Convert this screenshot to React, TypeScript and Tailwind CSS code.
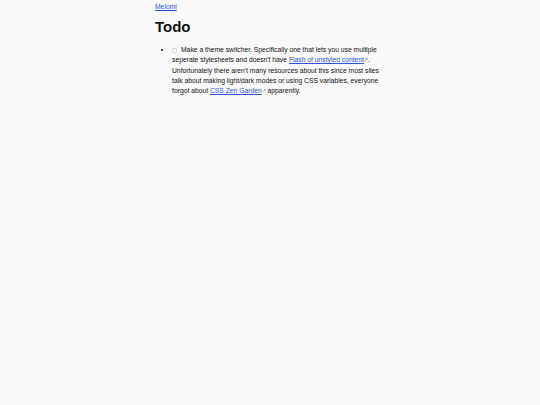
import React from 'react'

function ExternalArrow() {
  return <span className="inline-block text-[5px] leading-none align-[1px] text-gray-500">↗</span>
}

export default function App() {
  return (
    <div className="min-h-[405px] bg-[#f9f9f9] font-['Liberation_Sans',Arial,sans-serif] text-[#111]">
      <div className="mx-auto w-[230px] pt-[2px]">
        <div className="text-[6.75px] leading-[10px]">
          <a href="#" className="text-[#2c55d6] underline underline-offset-1">
            Melomi
          </a>
        </div>
        <h1 className="mt-[6px] text-[15px] font-bold leading-[18px]">Todo</h1>
        <ul className="mt-[9px] list-disc pl-[17px] text-[6.75px] leading-[10.3px]">
          <li>
            <span className="inline-block w-[5px] h-[5px] border border-gray-300 rounded-[1px] bg-white mr-[4px] align-[-0.5px]" />
            Make a theme switcher. Specifically one that lets you use multiple seperate stylesheets and doesn't have{' '}
            <a href="#" className="text-[#2c55d6] underline underline-offset-1">Flash of unstyled content</a>
            <ExternalArrow />. Unfortunately there aren't many resources about this since most sites talk about making
            light/dark modes or using CSS variables, everyone forgot about{' '}
            <a href="#" className="text-[#2c55d6] underline underline-offset-1">CSS Zen Garden</a>
            <ExternalArrow /> apparently.
          </li>
        </ul>
      </div>
    </div>
  )
}
